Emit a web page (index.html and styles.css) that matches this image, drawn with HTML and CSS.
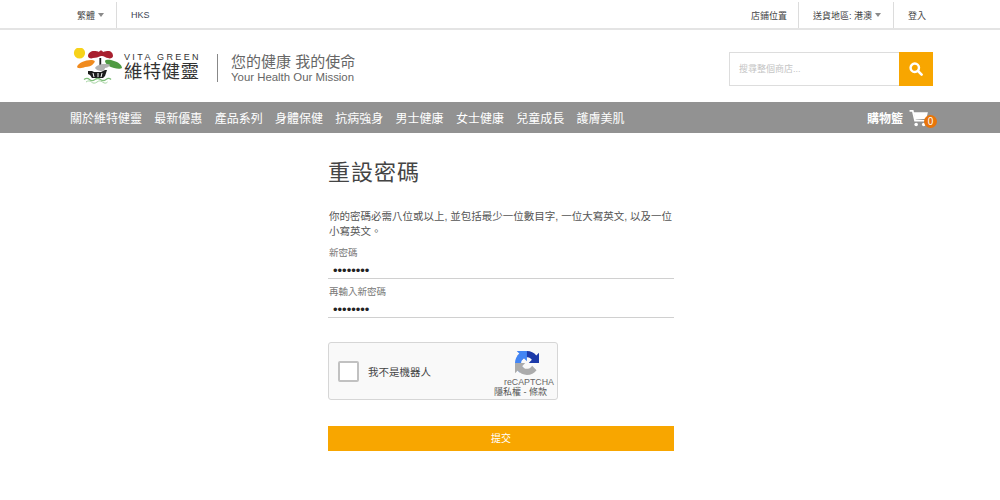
FILE: index.html
```html
<!DOCTYPE html>
<html lang="zh-Hant">
<head>
<meta charset="utf-8">
<title>重設密碼</title>
<link rel="stylesheet" href="styles.css">
</head>
<body>
<div class="topbar">
  <div class="top-group">
    <a class="top-item first">繁體<span class="caret"></span></a>
    <a class="top-item hks">HKS</a>
  </div>
  <div class="top-group">
    <a class="top-item store">店鋪位置</a>
    <a class="top-item region">送貨地區: 港澳<span class="caret"></span></a>
    <a class="top-item login">登入</a>
  </div>
</div>
<header class="header">
  <div class="brand">
    <svg class="logo-mark" width="50" height="36" viewBox="0 0 50 36">
      <circle cx="6.500" cy="5" r="5.600" fill="#f7d21a"/>
      <path d="M15 8c0-3 3-5 6-5 2 0 4 0 5 1 1-2 3-2 4 0 2-1 4-1 5-1 3 0 5 2 5 5 0 2-3 3-5 2-2 0-4-2-6-2l-1 0c-3 1-5 2-8 2-2 1-5 0-5-2z" fill="#a8202f"/>
      <rect x="26.400" y="10" width="1.800" height="7" fill="#222"/>
      <path d="M4 19c1-4 8-7 14-7 3 0 5 1 3 3-2 3-6 4-9 4-2 1-7 2-8 0z" fill="#f08a1d"/>
      <path d="M32 13c1-2 6-1 9 0 4 1 8 4 8 7-1 1-5 1-8 0-4-1-9-4-9-7z" fill="#4f9a42"/>
      <path d="M22 20c1-2 5-4 9-4 3 0 6 0 6 1-1 2-3 3-5 3 0 2-2 3-4 3s-5-1-6-3z" fill="#b3b3b3"/>
      <path d="M15 23l4 0 2 1 7 0 4-2 2 0-2 6-2 2H19l-2-3-2-1z" fill="#1c1c1c"/>
      <path d="M20 25l1 4M25 25l0 4M29 25l-1 4" stroke="#fff" stroke-width="1"/>
      <path d="M11 31.500c2-1.500 4-1.500 5.500 0s3.500 1.500 5.500 0 3.500-1.500 5.500 0 3.500 1.500 5.500 0 3.500-1.500 5 0" fill="none" stroke="#7fbf7a" stroke-width="1.300"/>
      <path d="M13 34c2-1.500 4-1.500 5.500 0s3.500 1.500 5.500 0 3.500-1.500 5.500 0 3.500 1.500 5 0" fill="none" stroke="#a4d3a0" stroke-width="1"/>
    </svg>
    <div class="logo-text">
      <div class="logo-en">VITA GREEN</div>
      <div class="logo-zh">維特健靈</div>
    </div>
    <div class="slogan">
      <div class="slogan-zh">您的健康 我的使命</div>
      <div class="slogan-en">Your Health Our Mission</div>
    </div>
  </div>
  <form class="search">
    <div class="search-input">搜尋整個商店...</div>
    <div class="search-btn">
      <svg width="14" height="14" viewBox="0 0 16 16"><circle cx="6.600" cy="6.600" r="4.800" fill="none" stroke="#fff" stroke-width="2.800"/><path d="M10.200 10.200 14.400 14.400" stroke="#fff" stroke-width="3" stroke-linecap="round"/></svg>
    </div>
  </form>
</header>
<nav class="nav">
  <div class="nav-links">
    <a>關於維特健靈</a><a>最新優惠</a><a>產品系列</a><a>身體保健</a><a>抗病強身</a><a>男士健康</a><a>女士健康</a><a>兒童成長</a><a>護膚美肌</a>
  </div>
  <div class="cart">
    <span class="cart-label">購物籃</span>
    <span class="cart-icon">
      <svg width="20" height="17" viewBox="0 0 20 18"><path d="M0 1h3.400l2.400 10.400h10.400" fill="none" stroke="#fff" stroke-width="1.800"/><path d="M4.400 2.400H19.400l-1.600 6.800-12 1.200z" fill="#fff"/><circle cx="7" cy="15.400" r="1.900" fill="#fff"/><circle cx="15" cy="15.400" r="1.900" fill="#fff"/></svg>
      <span class="badge">0</span>
    </span>
  </div>
</nav>
<main class="main">
  <section class="panel">
    <h1 class="title">重設密碼</h1>
    <p class="intro">你的密碼必需八位或以上, 並包括最少一位數目字, 一位大寫英文, 以及一位小寫英文。</p>
    <div class="field">
      <label class="label">新密碼</label>
      <div class="dots">••••••••</div>
    </div>
    <div class="field">
      <label class="label">再輸入新密碼</label>
      <div class="dots">••••••••</div>
    </div>
    <div class="captcha">
      <span class="check"></span>
      <span class="captcha-text">我不是機器人</span>
      <div class="captcha-brand">
        <svg class="captcha-logo" width="24" height="24" viewBox="0 0 64 64">
          <path fill="#1c3aa9" d="M64 31.955l-.033-1.370V4.687l-7.160 7.160C50.948 4.674 42.033.093 32.050.093c-10.400 0-19.622 4.960-25.458 12.640l11.736 11.860a15.550 15.550 0 0 1 4.754-5.334c2.050-1.600 4.952-2.906 8.968-2.906.485 0 .860.057 1.135.163 4.976.393 9.288 3.140 11.828 7.124l-8.307 8.307L64 31.953"/>
          <path fill="#4285f4" d="M31.862.094l-1.370.033H4.594l7.160 7.160C4.580 13.147 0 22.060 0 32.046c0 10.400 4.960 19.622 12.640 25.458L24.500 45.768a15.550 15.550 0 0 1-5.334-4.754c-1.600-2.050-2.906-4.952-2.906-8.968 0-.485.057-.860.163-1.135.393-4.976 3.140-9.288 7.124-11.828l8.307 8.307L31.860.095"/>
          <path fill="#ababab" d="M.001 32.045l.033 1.370v25.898l7.160-7.160c5.860 7.173 14.774 11.754 24.760 11.754 10.400 0 19.622-4.960 25.458-12.640l-11.736-11.860a15.550 15.550 0 0 1-4.754 5.334c-2.050 1.600-4.952 2.906-8.968 2.906-.485 0-.860-.057-1.135-.163-4.976-.393-9.288-3.140-11.828-7.124l8.307-8.307c-10.522.040-22.400.066-29.295 0"/>
        </svg>
        <span class="captcha-name">reCAPTCHA</span>
        <span class="captcha-links">隱私權 - 條款</span>
      </div>
    </div>
    <button class="submit" type="button">提交</button>
  </section>
</main>
</body>
</html>
```
FILE: styles.css
```css
* { box-sizing: border-box; }
html, body { margin: 0; padding: 0; }
body {
  width: 1000px;
  height: 500px;
  overflow: hidden;
  background: #fff;
  color: #333;
  font-family: "Liberation Sans", "Noto Sans CJK TC", sans-serif;
}
a { color: inherit; text-decoration: none; }

.topbar {
  height: 30px;
  padding: 2px 74px 0 60px;
  display: flex;
  justify-content: space-between;
  border-bottom: 2px solid #e4e4e4;
}
.top-group { display: flex; }
.top-item {
  display: flex;
  align-items: center;
  height: 26px;
  padding: 0 16px;
  font-size: 9px;
  color: #444;
  border-left: 1px solid #dcdcdc;
}
.top-item.first { border-left: 0; padding: 0 12px 0 17px; }
.hks { padding-left: 14px; color: #3c4452; }
.store { border-left: 0; padding-right: 11px; }
.region { padding-left: 14px; padding-right: 12px; }
.login { padding-left: 14px; padding-right: 0; }
.caret {
  display: inline-block;
  margin-left: 3px;
  border-left: 3.500px solid transparent;
  border-right: 3.500px solid transparent;
  border-top: 4px solid #8a8a8a;
}

.header {
  height: 72px;
  padding: 18px 67px 0 73px;
  display: flex;
  justify-content: space-between;
  align-items: flex-start;
}
.brand { display: flex; align-items: flex-start; }
.logo-text { margin-left: 1px; padding-top: 5px; width: 75px; }
.logo-en { font-size: 9px; line-height: 9px; letter-spacing: 2.350px; color: #333; white-space: nowrap; }
.logo-zh { font-size: 18.500px; line-height: 20px; letter-spacing: .3px; color: #333; white-space: nowrap; }
.slogan {
  margin-left: 18px;
  margin-top: 6px;
  padding-left: 13px;
  height: 28px;
  border-left: 1px solid #888;
  color: #666;
}
.slogan-zh { font-size: 15px; line-height: 17px; margin-top: -1px; white-space: nowrap; }
.slogan-en { font-size: 11.400px; line-height: 14px; white-space: nowrap; }

.search { display: flex; width: 204px; height: 34px; margin-top: 4px; }
.search-input {
  flex: 1;
  border: 1px solid #ddd;
  border-right: 0;
  font-size: 9px;
  line-height: 32px;
  padding-left: 9px;
  color: #c4c4c4;
}
.search-btn {
  width: 34px;
  background: #f8a600;
  display: flex;
  align-items: center;
  justify-content: center;
}

.nav {
  height: 31px;
  background: #929292;
  padding: 0 63px 0 70px;
  display: flex;
  justify-content: space-between;
  align-items: center;
  color: #fff;
}
.nav-links { display: flex; gap: 12.300px; font-size: 12px; }
.cart { display: flex; align-items: center; }
.cart-label { font-size: 12px; font-weight: bold; margin-right: 6px; }
.cart-icon { position: relative; display: block; width: 28px; height: 20px; padding-top: 2px; }
.cart-icon svg { display: block; }
.badge {
  position: absolute;
  right: 0;
  bottom: 0;
  width: 13px;
  height: 13px;
  border-radius: 50%;
  background: #e8750a;
  font-size: 10px;
  line-height: 13px;
  text-align: center;
  color: #fff;
}

.main { padding: 25px 0 0 328px; }
.panel { width: 346px; }
.title {
  margin: 0;
  font-size: 22px;
  line-height: 30px;
  font-weight: normal;
  letter-spacing: 1px;
  color: #444;
}
.intro {
  margin: 21px 0 1px;
  font-size: 10.500px;
  line-height: 15px;
  color: #555;
  padding-left: 1px;
}
.field { height: 39px; padding-top: 5px; border-bottom: 1px solid #d0d0d0; }
.label { display: block; font-size: 9.500px; line-height: 16px; padding-left: 1px; color: #777; }
.dots { font-size: 13px; line-height: 14px; margin-top: 3px; padding-left: 5px; color: #222; }

.captcha {
  margin-top: 24px;
  width: 230px;
  height: 58px;
  background: #f9f9f9;
  border: 1px solid #d6d6d6;
  border-radius: 3px;
  display: flex;
  align-items: center;
  padding-left: 9px;
}
.check {
  width: 21px;
  height: 21px;
  background: #fff;
  border: 2px solid #c1c1c1;
  border-radius: 2px;
}
.captcha-text { margin-left: 9px; font-size: 10.500px; color: #444; }
.captcha-brand {
  margin-left: auto;
  width: 65px;
  height: 56px;
  display: flex;
  flex-direction: column;
  align-items: flex-start;
  padding-top: 8px;
}
.captcha-logo { display: block; margin-left: 23px; }
.captcha-name { font-size: 8.800px; line-height: 10px; margin: 2px 0 0 12px; color: #666; }
.captcha-links { font-size: 9px; line-height: 11px; margin-left: 2px; color: #555; white-space: nowrap; }

.submit {
  display: block;
  margin-top: 26px;
  width: 346px;
  height: 25px;
  background: #f8a600;
  border: 0;
  padding: 0 0 2px;
  color: #fff;
  font-family: inherit;
  font-size: 10px;
}
```
